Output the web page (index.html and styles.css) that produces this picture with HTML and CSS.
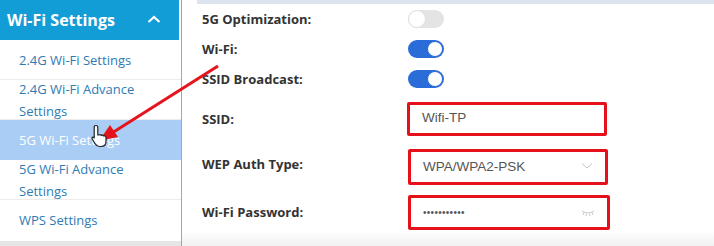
FILE: index.html
```html
<!DOCTYPE html>
<html lang="en">
  <head>
    <meta charset="UTF-8" />
    <meta name="viewport" content="width=device-width, initial-scale=1.0" />
    <title>Wi-Fi Settings</title>
    <link rel="stylesheet" href="styles.css">
  </head>
  <body>
    <div class="page">
      <div class="sidebar">
        <div class="side-head">
          <span>Wi-Fi Settings</span>
          <svg class="caret" width="14" height="10" viewBox="0 0 14 10">
            <path d="M1.5 8 L7 3 L12.5 8" fill="none" stroke="#fff" stroke-width="2.2" />
          </svg>
        </div>
        <div class="menu">
          <div class="item">2.4G Wi-Fi Settings</div>
          <div class="item">2.4G Wi-Fi Advance<br>Settings</div>
          <div class="item active">5G Wi-Fi Settings</div>
          <div class="item">5G Wi-Fi Advance<br>Settings</div>
          <div class="item last">WPS Settings</div>
        </div>
      </div>

      <div class="main">
        <div class="topbar"></div>
        <div class="row r1">
          <div class="label">5G Optimization:</div>
          <div class="toggle off"><div class="knob"></div></div>
        </div>
        <div class="row r2">
          <div class="label">Wi-Fi:</div>
          <div class="toggle"><div class="knob"></div></div>
        </div>
        <div class="row r3">
          <div class="label">SSID Broadcast:</div>
          <div class="toggle"><div class="knob"></div></div>
        </div>
        <div class="row r4">
          <div class="label">SSID:</div>
          <div class="box">Wifi-TP</div>
        </div>
        <div class="row r5">
          <div class="label">WEP Auth Type:</div>
          <div class="box">
            <span>WPA/WPA2-PSK</span>
            <svg width="12" height="8" viewBox="0 0 12 8">
              <path d="M1 1.5 L6 6 L11 1.5" fill="none" stroke="#c4c4c4" stroke-width="1" />
            </svg>
          </div>
        </div>
        <div class="row r6">
          <div class="label">Wi-Fi Password:</div>
          <div class="box">
            <span class="dots">&bull;&bull;&bull;&bull;&bull;&bull;&bull;&bull;&bull;&bull;&bull;</span>
            <svg width="14" height="8" viewBox="0 0 14 8">
              <path d="M1 2 Q7 6 13 2" fill="none" stroke="#c8c8c8" stroke-width="1" />
              <path d="M3 3.5 L2 6 M5.5 4.8 L5 7 M8.5 4.8 L9 7 M11 3.5 L12 6" stroke="#c8c8c8" stroke-width="1" />
            </svg>
          </div>
        </div>
      </div>
    </div>
    <div class="footer"></div>
    <div class="footer-side"></div>

    <!-- annotation drawn over the page -->
    <svg class="arrow" width="714" height="246" viewBox="0 0 714 246">
      <line x1="218" y1="66" x2="112" y2="133" stroke="#e5141c" stroke-width="3" />
      <polygon points="99,141 118,137 110,125" fill="#e5141c" />
    </svg>
    <svg class="cursor" width="20" height="24" viewBox="0 0 20 24">
      <path d="M6 1.5 C7.2 1.5 7.8 2.2 7.8 3.5 L7.8 11 L9 11 C10 10.5 11 10.6 11.5 11.4 C12.4 11 13.4 11.2 13.8 12 C14.8 11.6 16 12.2 16 13.5 L16 17.5 C16 20.5 14 22.5 11 22.5 L9.5 22.5 C7.5 22.5 6.3 21.5 5.2 19.8 L2.2 15 C1.6 14 2.2 13 3.3 13.2 C4 13.4 4.2 14 4.2 14.4 L4.2 3.5 C4.2 2.2 4.8 1.5 6 1.5 Z" fill="#fff" stroke="#222" stroke-width="1.2" />
    </svg>
  </body>
</html>
```

FILE: styles.css
```css
* {
  margin: 0;
  padding: 0;
  box-sizing: border-box;
}

body {
  width: 714px;
  height: 246px;
  overflow: hidden;
  background: #fff;
  position: relative;
  font-family: "Open Sans", "Noto Sans", sans-serif;
}

.page {
  display: flex;
  height: 246px;
}

.sidebar {
  width: 182px;
  border-right: 1px solid #78b3cf;
  flex-shrink: 0;
}

.side-head {
  height: 40px;
  background: #139dd6;
  color: #fff;
  font-size: 16px;
  font-weight: 700;
  display: flex;
  align-items: center;
  justify-content: space-between;
  padding: 0 18px 0 7px;
  margin-right: 2px;
}

.caret {
  margin-top: -2px;
}

.menu {
  color: #2e7bb4;
  font-size: 13px;
}

.item {
  height: 40px;
  line-height: 22px;
  padding-left: 19px;
  display: flex;
  align-items: center;
  border-bottom: 1px solid #ececec;
}

.item.active {
  background: #a9cdf5;
  color: #fff;
  border-bottom: none;
}

.item.last {
  border-bottom: none;
}

.main {
  flex: 1;
  padding-left: 20px;
}

.topbar {
  height: 4px;
  background: #dde4ef;
  margin-left: -5px;
}

.row {
  display: flex;
  align-items: center;
}

.label {
  width: 206px;
  font-size: 13px;
  font-weight: 700;
  color: #333;
}

.r1, .r2, .r3 {
  height: 30px;
}

.r4 {
  margin-top: 8px;
  height: 34px;
}

.r5 {
  margin-top: 13px;
  height: 36px;
}

.r5 .label {
  margin-top: -6px;
}

.r6 {
  margin-top: 10px;
  height: 35px;
}

.r6 .label {
  margin-top: -2px;
}

.toggle {
  width: 36px;
  height: 18px;
  border-radius: 9px;
  background: #2a6cd8;
  position: relative;
}

.toggle .knob {
  position: absolute;
  top: 1px;
  right: 1px;
  width: 16px;
  height: 16px;
  border-radius: 50%;
  background: #fff;
  border: 1px solid #2a6cd8;
}

.toggle.off {
  background: #e4e4e4;
}

.toggle.off .knob {
  right: auto;
  left: 0;
  top: 0;
  width: 18px;
  height: 18px;
  border: 1px solid #e0e0e0;
}

.box {
  width: 200px;
  height: 100%;
  border: 3px solid #e5101a;
  border-radius: 2px;
  padding: 0 12px;
  display: flex;
  align-items: center;
  justify-content: space-between;
  font-family: "Liberation Sans", Arial, sans-serif;
  font-size: 13.5px;
  color: #555;
}

.r4 .box {
  margin-left: -1px;
  padding-bottom: 4px;
}

.r5 .box {
  padding-bottom: 2px;
}

.r6 .box {
  width: 202px;
}

.dots {
  font-size: 10px;
  letter-spacing: 0.3px;
  color: #555;
}

.footer {
  position: absolute;
  left: 182px;
  right: 0;
  bottom: 0;
  height: 13px;
  background: linear-gradient(#fdfdfd, #f1f1f1);
}

.footer-side {
  position: absolute;
  left: 0;
  width: 181px;
  bottom: 0;
  height: 5px;
  background: #e6e6e6;
}

.arrow {
  position: absolute;
  left: 0;
  top: 0;
  pointer-events: none;
}

.cursor {
  position: absolute;
  left: 90px;
  top: 124px;
}
```
